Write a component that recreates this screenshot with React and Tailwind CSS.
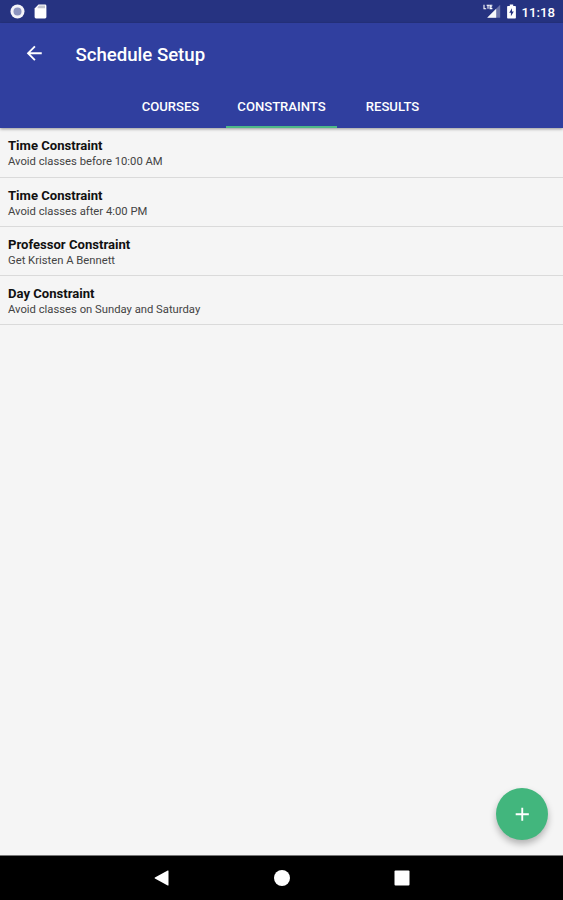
// Schedule setup screen, constraints tab
import { useState } from "react";

const TABS = [
  { id: "courses", label: "Courses" },
  { id: "constraints", label: "Constraints" },
  { id: "results", label: "Results" },
];

const CONSTRAINTS = [
  { id: 1, title: "Time Constraint", detail: "Avoid classes before 10:00 AM" },
  { id: 2, title: "Time Constraint", detail: "Avoid classes after 4:00 PM" },
  { id: 3, title: "Professor Constraint", detail: "Get Kristen A Bennett" },
  { id: 4, title: "Day Constraint", detail: "Avoid classes on Sunday and Saturday" },
];

const StatusBar = () => (
  <div className="flex h-[22.5px] shrink-0 items-center justify-between bg-[#263381] pl-[10px] pr-[8px] text-white">
    <div className="flex items-center gap-[9px] pt-[1px]">
      <svg className="h-[15px] w-[15px]" viewBox="0 0 15 15">
        <circle cx="7.5" cy="7.5" r="7" fill="#fff" fillOpacity="0.95" />
        <circle cx="7.5" cy="7.5" r="4" fill="#8c94bf" />
      </svg>
      <svg className="h-[15px] w-[13px]" viewBox="0 0 13 15">
        <path d="M4.5 0.5H11a1.4 1.4 0 0 1 1.4 1.4v11.2a1.4 1.4 0 0 1-1.4 1.4H2a1.4 1.4 0 0 1-1.4-1.4V4.5z" fill="#fff" />
        <path d="M5 1.5h6v2.8H3.6V3z" fill="#c3c5cf" />
      </svg>
    </div>
    <div className="flex items-center pt-[1px]">
      <svg className="h-[15px] w-[18px]" viewBox="0 0 18 15">
        <path d="M17.2 0.8v13H4.2z" fill="#fff" fillOpacity="0.32" />
        <path d="M13.2 4.8v9h-9z" fill="#fff" fillOpacity="0.95" />
        <path d="M1 0.8v4h2.2M3.6 1.2h2.8M5 1.2v3.6M9.4 1.2H7.1v3.4h2.3M7.1 2.9h2" fill="none" stroke="#fff" strokeWidth="1.1" />
      </svg>
      <svg className="ml-[6px] h-[15px] w-[9px]" viewBox="0 0 9 15">
        <path fillRule="evenodd" d="M2.8 0.5h3.4v1.4h1.9a0.8 0.8 0 0 1 0.8 0.8v11a0.8 0.8 0 0 1-0.8 0.8H0.9a0.8 0.8 0 0 1-0.8-0.8v-11a0.8 0.8 0 0 1 0.8-0.8h1.9zM5 4.2 2.2 8.8h1.7v3.4l2.9-4.8H5z" fill="#fff" />
      </svg>
      <span className="ml-[6px] pt-[2px] text-[13.2px] font-medium leading-[15px]">11:18</span>
    </div>
  </div>
);

const Header = ({ active, onSelect }) => (
  <header className="relative z-10 h-[105px] shrink-0 bg-[#303f9f] text-white shadow-[0_1px_3px_rgba(0,0,0,0.4)]">
    <div className="flex h-[60px] items-center pl-[23px] pt-[2px]">
      <button type="button" aria-label="Back">
        <svg className="h-[22.5px] w-[22.5px]" viewBox="0 0 24 24" fill="currentColor">
          <path d="M20 11H7.83l5.59-5.59L12 4l-8 8 8 8 1.41-1.41L7.83 13H20v-2z" />
        </svg>
      </button>
      <h1 className="ml-[30px] pt-[2px] text-[18.6px] font-medium leading-6">Schedule Setup</h1>
    </div>
    <nav className="flex h-[45px] justify-center">
      {TABS.map((tab) => (
        <button
          key={tab.id}
          type="button"
          onClick={() => onSelect(tab.id)}
          className={`w-[111px] border-b-[2px] pt-[5px] text-[13.1px] font-medium uppercase ${
            active === tab.id ? "border-[#4db888]" : "border-transparent"
          }`}
        >
          {tab.label}
        </button>
      ))}
    </nav>
  </header>
);

const ConstraintRow = ({ title, detail }) => (
  <li className="h-[49.25px] border-b border-[#dadada] px-[8px] pt-[9px]">
    <p className="text-[13.1px] font-bold leading-[17px] text-[#111]">{title}</p>
    <p className="text-[11.25px] leading-[15px] text-[#444]">{detail}</p>
  </li>
);

const NavBar = () => (
  <footer className="flex h-[45px] shrink-0 items-center justify-center gap-[104px] border-t border-[#777] bg-black text-white">
    <svg className="h-4 w-4" viewBox="0 0 16 16" fill="currentColor">
      <path d="M14.5 1v14q0 .8-.8.4L.9 8.6q-.7-.6 0-1.2L13.7.6q.8-.4.8.4z" />
    </svg>
    <svg className="h-4 w-4" viewBox="0 0 16 16" fill="currentColor">
      <circle cx="8" cy="8" r="8" />
    </svg>
    <svg className="h-4 w-4" viewBox="0 0 16 16" fill="currentColor">
      <rect x="0.5" y="0.5" width="15" height="15" rx="1" />
    </svg>
  </footer>
);

export default function App() {
  const [active, setActive] = useState("constraints");

  return (
    <div className="flex h-[900px] w-[563px] flex-col overflow-hidden bg-[#f5f5f5] font-[Roboto,sans-serif]">
      <StatusBar />
      <Header active={active} onSelect={setActive} />
      <main className="relative flex-1">
        <ul className="pt-[0.75px]">
          {CONSTRAINTS.map((c) => (
            <ConstraintRow key={c.id} title={c.title} detail={c.detail} />
          ))}
        </ul>
        {/* Floating add button */}
        <button
          type="button"
          aria-label="Add constraint"
          className="absolute bottom-[15px] right-[15px] flex h-[52.5px] w-[52.5px] items-center justify-center rounded-full bg-[#42b67d] text-white shadow-[0_4px_7px_rgba(0,0,0,0.28)]"
        >
          <svg className="h-[22.5px] w-[22.5px]" viewBox="0 0 24 24" fill="currentColor">
            <path d="M19 13h-6v6h-2v-6H5v-2h6V5h2v6h6v2z" />
          </svg>
        </button>
      </main>
      <NavBar />
    </div>
  );
}
